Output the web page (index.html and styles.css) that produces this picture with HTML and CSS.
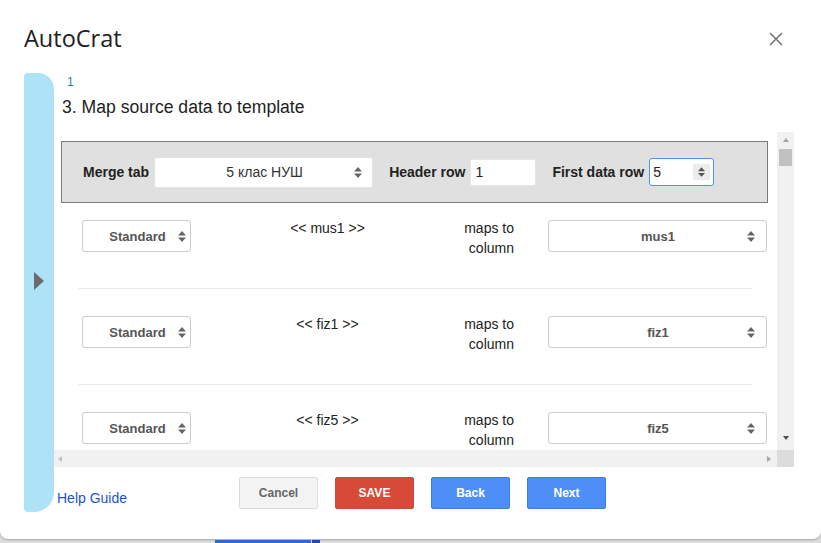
FILE: index.html
```html
<!DOCTYPE html>
<html lang="en">
<head>
    <meta charset="UTF-8">
    <meta name="viewport" content="width=device-width, initial-scale=1.0">
    <title>AutoCrat</title>
    <link rel="stylesheet" href="styles.css">
</head>
<body>

    <div class="dialog">
        <!-- Title bar -->
        <div class="dialog-header">
            <h1 class="dialog-title">AutoCrat</h1>
            <button class="close-btn" aria-label="Close">
                <svg viewBox="0 0 14 14" width="14" height="14"><path d="M1 1L13 13M13 1L1 13" stroke="#757575" stroke-width="1.6" fill="none"/></svg>
            </button>
        </div>

        <div class="dialog-body">
            <!-- Step rail on the left -->
            <div class="step-rail"><span class="rail-arrow"></span></div>

            <div class="step-main">
                <div class="step-num">1</div>
                <h2 class="step-title">3. Map source data to template</h2>

                <div class="scroll-frame">
                    <div class="scroll-view">
                        <div class="merge-bar">
                            <div class="ctl">
                                Merge tab
                                <div class="select select-tab">
                                    <span class="select-text">5 клас НУШ</span>
                                    <svg viewBox="0 0 8 11"><path d="M0 4.5L4 0L8 4.5ZM0 6.5L4 11L8 6.5Z"/></svg>
                                </div>
                            </div>
                            <div class="ctl">
                                Header row
                                <input class="text-input" type="text" value="1">
                            </div>
                            <div class="ctl">
                                First data row
                                <div class="spin-field">
                                    <input type="text" value="5">
                                    <span class="spinner"><svg viewBox="0 0 8 11"><path d="M0 4.5L4 0L8 4.5ZM0 6.5L4 11L8 6.5Z"/></svg></span>
                                </div>
                            </div>
                        </div>

                        <div class="map-list">
                            <div class="map-row">
                                <div class="select select-sm">
                                    <span class="select-text">Standard</span>
                                    <svg viewBox="0 0 8 11"><path d="M0 4.5L4 0L8 4.5ZM0 6.5L4 11L8 6.5Z"/></svg>
                                </div>
                                <div class="map-tag">&lt;&lt; mus1 &gt;&gt;</div>
                                <div class="maps-to">maps to<br>column</div>
                                <div class="select select-col">
                                    <span class="select-text">mus1</span>
                                    <svg viewBox="0 0 8 11"><path d="M0 4.5L4 0L8 4.5ZM0 6.5L4 11L8 6.5Z"/></svg>
                                </div>
                            </div>
                            <div class="map-row">
                                <div class="select select-sm">
                                    <span class="select-text">Standard</span>
                                    <svg viewBox="0 0 8 11"><path d="M0 4.5L4 0L8 4.5ZM0 6.5L4 11L8 6.5Z"/></svg>
                                </div>
                                <div class="map-tag">&lt;&lt; fiz1 &gt;&gt;</div>
                                <div class="maps-to">maps to<br>column</div>
                                <div class="select select-col">
                                    <span class="select-text">fiz1</span>
                                    <svg viewBox="0 0 8 11"><path d="M0 4.5L4 0L8 4.5ZM0 6.5L4 11L8 6.5Z"/></svg>
                                </div>
                            </div>
                            <div class="map-row">
                                <div class="select select-sm">
                                    <span class="select-text">Standard</span>
                                    <svg viewBox="0 0 8 11"><path d="M0 4.5L4 0L8 4.5ZM0 6.5L4 11L8 6.5Z"/></svg>
                                </div>
                                <div class="map-tag">&lt;&lt; fiz5 &gt;&gt;</div>
                                <div class="maps-to">maps to<br>column</div>
                                <div class="select select-col">
                                    <span class="select-text">fiz5</span>
                                    <svg viewBox="0 0 8 11"><path d="M0 4.5L4 0L8 4.5ZM0 6.5L4 11L8 6.5Z"/></svg>
                                </div>
                            </div>
                        </div>
                    </div>

                    <!-- Scrollbars -->
                    <div class="vbar">
                        <span class="sb-btn"><i class="tri tri-up"></i></span>
                        <span class="vthumb"></span>
                        <span class="sb-btn sb-down"><i class="tri tri-down"></i></span>
                    </div>
                    <div class="hbar">
                        <span class="sb-btn sb-left"><i class="tri tri-left"></i></span>
                        <span class="sb-btn sb-right"><i class="tri tri-right"></i></span>
                    </div>
                    <div class="corner"></div>
                </div>

                <div class="step-footer">
                    <a href="#" class="help-link">Help Guide</a>
                    <div class="actions">
                        <button class="btn btn-cancel">Cancel</button>
                        <button class="btn btn-save">SAVE</button>
                        <button class="btn btn-blue">Back</button>
                        <button class="btn btn-blue">Next</button>
                    </div>
                </div>
            </div>
        </div>
    </div>

    <!-- Sheet tabs peeking out under the dialog -->
    <div class="sheet-strip">
        <span class="sheet-tab"></span>
        <span class="sheet-tab-end"></span>
    </div>

</body>
</html>
```

FILE: styles.css
```css
body {
    margin: 0;
    height: 543px;
    overflow: hidden;
    background-color: #dcdcdc;
    font-family: 'Liberation Sans', Arial, sans-serif;
    color: #222;
}

.dialog {
    height: 539px;
    background-color: #ffffff;
    border-radius: 0 0 8px 8px;
    box-shadow: 0 1px 2px rgba(0, 0, 0, 0.25);
}

.dialog-header {
    display: flex;
    justify-content: space-between;
    align-items: center;
    padding: 22px 38px 0 24px;
}

.dialog-title {
    margin: 0;
    font-family: 'Open Sans', sans-serif;
    font-size: 23.5px;
    font-weight: 400;
    line-height: 33px;
    color: #202124;
}

.close-btn {
    display: flex;
    padding: 0;
    border: 0;
    background: none;
    cursor: pointer;
}

.dialog-body {
    display: flex;
    margin-top: 18px;
    padding-left: 24px;
}

.step-rail {
    width: 30px;
    height: 439px;
    box-sizing: border-box;
    padding: 199px 0 0 10px;
    background-color: #aee3f7;
    border-radius: 4px 16px 20px 4px;
}

.rail-arrow {
    display: block;
    width: 0;
    height: 0;
    border-left: 10px solid #6b6b6b;
    border-top: 9px solid transparent;
    border-bottom: 9px solid transparent;
}

.step-main {
    width: 740px;
}

.step-num {
    margin: 2px 0 0 13px;
    font-size: 12px;
    line-height: 14px;
    color: #2b7bb9;
}

.step-title {
    margin: 7px 0 0 8px;
    font-size: 17.6px;
    font-weight: 400;
    line-height: 22px;
    color: #222;
}

/* Scroll area with its bars */
.scroll-frame {
    display: grid;
    grid-template-columns: 723px 17px;
    grid-template-rows: 318px 17px;
    margin-top: 14px;
}

.scroll-view {
    overflow: hidden;
    padding: 9px 0 0 7px;
}

.merge-bar {
    display: flex;
    align-items: center;
    gap: 16px;
    width: 707px;
    height: 62px;
    box-sizing: border-box;
    padding-left: 21px;
    background-color: #e0e0e0;
    border: 1px solid #7b7b7b;
}

.ctl {
    display: flex;
    align-items: center;
    gap: 5px;
    font-size: 14px;
    font-weight: bold;
    color: #222;
    white-space: nowrap;
}

.select {
    display: flex;
    align-items: center;
    box-sizing: border-box;
    background-color: #ffffff;
    border: 1px solid #cccccc;
    border-radius: 3px;
    white-space: nowrap;
}

.select-text {
    flex: 1;
    text-align: center;
}

.select svg {
    width: 8px;
    height: 11px;
    fill: #666;
}

.select-tab {
    width: 219px;
    height: 31px;
    padding: 0 10px 0 20px;
    border-color: #e4e4e4;
    font-weight: normal;
    color: #333;
}

.text-input {
    width: 66px;
    height: 27px;
    box-sizing: border-box;
    padding: 0 4px;
    border: 1px solid #e6e6e6;
    border-radius: 2px;
    font-family: 'Liberation Sans', Arial, sans-serif;
    font-size: 14px;
    color: #222;
    outline: none;
}

.spin-field {
    display: flex;
    align-items: center;
    width: 65px;
    height: 28px;
    box-sizing: border-box;
    padding: 0 3px;
    background-color: #ffffff;
    border: 1px solid #4d90fe;
    border-radius: 3px;
}

.spin-field input {
    flex: 1;
    min-width: 0;
    padding: 0;
    border: 0;
    outline: none;
    font-family: 'Liberation Sans', Arial, sans-serif;
    font-size: 14px;
    color: #222;
}

.spinner {
    display: flex;
    align-items: center;
    justify-content: center;
    width: 17px;
    height: 16px;
    background-color: #ececec;
}

.spinner svg {
    width: 7px;
    height: 10px;
    fill: #555;
}

.map-list {
    padding-top: 17px;
}

.map-row {
    display: grid;
    grid-template-columns: 109px 273px 50px 253px;
    grid-template-rows: 32px;
    align-items: start;
    width: 674px;
    box-sizing: border-box;
    margin: 0 0 27px 17px;
    padding: 0 0 36px 4px;
    border-bottom: 1px solid #ebebeb;
}

.map-tag,
.maps-to {
    margin-top: -2px;
    font-size: 14px;
    line-height: 20px;
    white-space: nowrap;
}

.map-tag {
    text-align: center;
}

.maps-to {
    text-align: right;
}

.select-sm {
    width: 109px;
    height: 32px;
    padding: 0 4px 0 14px;
    font-size: 13px;
    font-weight: bold;
    color: #555;
}

.select-col {
    width: 219px;
    height: 32px;
    margin-left: 34px;
    padding: 0 11px 0 20px;
    font-size: 13px;
    font-weight: bold;
    color: #555;
}

.vbar,
.hbar {
    display: flex;
    background-color: #f1f1f1;
}

.vbar {
    flex-direction: column;
}

.sb-btn {
    display: flex;
    align-items: center;
    justify-content: center;
    height: 16px;
}

.sb-down {
    margin-top: auto;
    padding-bottom: 4px;
}

.hbar .sb-btn {
    height: auto;
}

.sb-left {
    width: 11px;
}

.sb-right {
    width: 16px;
    margin-left: auto;
}

.vthumb {
    height: 17px;
    margin: 1px 2px 0;
    background-color: #c1c1c1;
}

.tri {
    width: 0;
    height: 0;
}

.tri-up {
    border-bottom: 4px solid #a3a3a3;
    border-left: 3.5px solid transparent;
    border-right: 3.5px solid transparent;
}

.tri-down {
    border-top: 4px solid #505050;
    border-left: 3.5px solid transparent;
    border-right: 3.5px solid transparent;
}

.tri-left {
    border-right: 4px solid #c0c0c0;
    border-top: 3.5px solid transparent;
    border-bottom: 3.5px solid transparent;
}

.tri-right {
    border-left: 4px solid #a3a3a3;
    border-top: 3.5px solid transparent;
    border-bottom: 3.5px solid transparent;
}

.corner {
    background-color: #dcdcdc;
}

/* Footer with help link and buttons */
.step-footer {
    display: grid;
    grid-template-columns: 1fr auto 1fr;
    align-items: start;
    padding-top: 10px;
}

.help-link {
    justify-self: start;
    margin: 13px 0 0 3px;
    font-size: 14px;
    line-height: 16px;
    color: #1a55c8;
    text-decoration: none;
}

.actions {
    display: flex;
    gap: 17px;
    margin-left: -3px;
}

.btn {
    width: 79px;
    height: 32px;
    box-sizing: border-box;
    padding: 0;
    border: 1px solid;
    border-radius: 2px;
    font-family: 'Liberation Sans', Arial, sans-serif;
    font-size: 12px;
    font-weight: bold;
    cursor: pointer;
}

.btn-cancel {
    background-color: #f3f3f3;
    border-color: #dcdcdc;
    color: #666;
}

.btn-save {
    background-color: #d84a38;
    border-color: #d14836;
    color: #ffffff;
}

.btn-blue {
    background-color: #4d8ff7;
    border-color: #3b7ce9;
    color: #ffffff;
}

.sheet-strip {
    display: flex;
    height: 3px;
    padding-top: 1px;
}

.sheet-tab {
    width: 96px;
    margin-left: 215px;
    background-color: #2a6bcc;
}

.sheet-tab-end {
    width: 8px;
    margin-left: 1px;
    background-color: #1d4e9e;
}
```
